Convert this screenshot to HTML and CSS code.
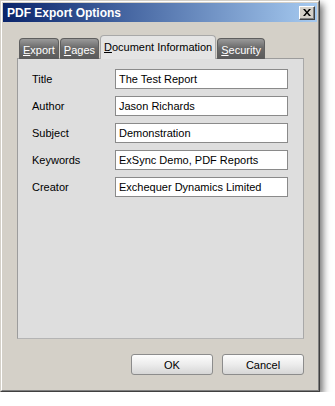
FILE: index.html
```html
<!DOCTYPE html>
<html lang="en">
<head>
    <meta charset="UTF-8">
    <meta name="viewport" content="width=device-width, initial-scale=1.0">
    <title>PDF Export Options</title>
    <link rel="stylesheet" href="styles.css">
</head>
<body>
    <div class="window">
        <div class="frame">
            <div class="titlebar">
                <span class="title">PDF Export Options</span>
                <span class="close">
                    <svg width="8" height="7" viewBox="0 0 8 7">
                        <path d="M0 0h2l2 2.5L6 0h2L5 3.5 8 7H6L4 4.5 2 7H0l3-3.5z" fill="#000"/>
                    </svg>
                </span>
            </div>

            <div class="content">
                <div class="tabs">
                    <div class="tab"><u>E</u>xport</div>
                    <div class="tab"><u>P</u>ages</div>
                    <div class="tab active"><u>D</u>ocument Information</div>
                    <div class="tab"><u>S</u>ecurity</div>
                </div>

                <div class="panel">
                    <div class="row">
                        <label>Title</label>
                        <div class="field">The Test Report</div>
                    </div>
                    <div class="row">
                        <label>Author</label>
                        <div class="field">Jason Richards</div>
                    </div>
                    <div class="row">
                        <label>Subject</label>
                        <div class="field">Demonstration</div>
                    </div>
                    <div class="row">
                        <label>Keywords</label>
                        <div class="field">ExSync Demo, PDF Reports</div>
                    </div>
                    <div class="row">
                        <label>Creator</label>
                        <div class="field">Exchequer Dynamics Limited</div>
                    </div>
                </div>

                <div class="buttons">
                    <button>OK</button>
                    <button>Cancel</button>
                </div>
            </div>
        </div>
    </div>
</body>
</html>
```

FILE: styles.css
```css
body {
    margin: 0;
    background-color: #fff;
    font-family: "Liberation Sans", Arial, sans-serif;
    font-size: 11px;
    color: #000;
}

.window {
    width: 320px;
    height: 392px;
    box-sizing: border-box;
    background-color: #d4d0c8;
    border: 1px solid;
    border-color: #d4d0c8 #404040 #404040 #d4d0c8;
    box-shadow: 3px 4px 7px rgba(0, 0, 0, 0.55);
}

.frame {
    height: 100%;
    box-sizing: border-box;
    border: 1px solid;
    border-color: #fff #808080 #808080 #fff;
    padding: 1px;
}

.titlebar {
    height: 19px;
    display: flex;
    align-items: center;
    justify-content: space-between;
    padding: 0 2px 0 4px;
    background: linear-gradient(90deg, #0a246a 0%, #3f5f9c 35%, #a6caf0 100%);
}

.title {
    color: #fff;
    font-weight: bold;
    font-size: 12px;
}

.close {
    width: 16px;
    height: 14px;
    box-sizing: border-box;
    display: flex;
    align-items: center;
    justify-content: center;
    background-color: #d4d0c8;
    border: 1px solid;
    border-color: #fff #404040 #404040 #fff;
    box-shadow: inset -1px -1px 0 #808080;
}

.content {
    padding: 13px 13px 0 14px;
}

.tabs {
    display: flex;
    align-items: flex-end;
    gap: 1px;
    padding-left: 2px;
    margin-bottom: -1px;
    position: relative;
}

.tab {
    height: 21px;
    box-sizing: border-box;
    padding: 1px 3px 0 3px;
    display: flex;
    align-items: center;
    color: #fff;
    background: linear-gradient(#9a9a9a, #6a6a6a 45%, #5a5a5a);
    border: 1px solid #5f5f5f;
    border-bottom: none;
    border-radius: 4px 4px 0 0;
}

.tab.active {
    height: 24px;
    padding: 0 3px 1px 3px;
    color: #000;
    background: #e4e4e4;
    border-color: #a8a8a8;
}

.panel {
    height: 281px;
    box-sizing: border-box;
    background-color: #dedede;
    border: 1px solid;
    border-color: #9c9c9c #a8a8a8 #b4b4b4 #9c9c9c;
    padding: 10px 0 0 14px;
    display: flex;
    flex-direction: column;
    gap: 7px;
}

.row {
    display: flex;
    align-items: center;
    height: 20px;
}

.row label {
    width: 83px;
}

.field {
    width: 173px;
    height: 20px;
    box-sizing: border-box;
    padding: 0 3px;
    display: flex;
    align-items: center;
    background-color: #fff;
    border: 1px solid #8a8a8a;
}

.buttons {
    display: flex;
    justify-content: flex-end;
    gap: 9px;
    margin-top: 15px;
}

button {
    width: 82px;
    height: 21px;
    font-family: "Liberation Sans", Arial, sans-serif;
    font-size: 11px;
    color: #000;
    background: linear-gradient(#fdfdfd, #ececec 50%, #d6d6d6);
    border: 1px solid #8c8c8c;
    border-radius: 3px;
}
```
